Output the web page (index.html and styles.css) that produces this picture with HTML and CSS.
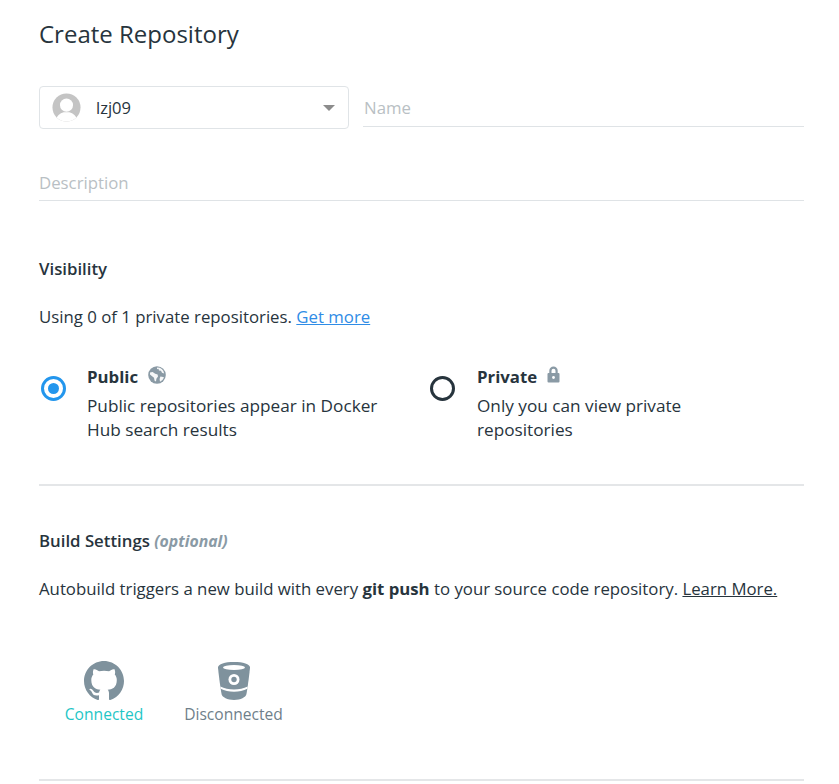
FILE: index.html
```html
<!DOCTYPE html>
<html lang="en">
<head>
<meta charset="utf-8">
<title>Create Repository</title>
<link rel="stylesheet" href="styles.css">
</head>
<body>
<main class="page">
  <h1 class="title">Create Repository</h1>
  <div class="name-row">
    <div class="select">
      <svg class="avatar" viewBox="0 0 30 30" aria-hidden="true">
        <defs><clipPath id="av"><circle cx="15" cy="15" r="14.5"/></clipPath></defs>
        <circle cx="15" cy="15" r="14.5" fill="#c4c4c4"/>
        <g clip-path="url(#av)" fill="#fff">
          <circle cx="15" cy="12.5" r="6.8"/>
          <path d="M3 32c0-7 5-11 9-12h6c4 1 9 5 9 12z"/>
        </g>
      </svg>
      <span class="select-value">lzj09</span>
      <span class="caret"></span>
    </div>
    <div class="field field-name">Name</div>
  </div>
  <div class="field field-desc">Description</div>

  <h2 class="section-title visibility-title">Visibility</h2>
  <p class="text usage">Using 0 of 1 private repositories. <a class="link-blue" href="#">Get more</a></p>

  <div class="radios">
    <div class="radio-item radio-public">
      <span class="radio radio-on"></span>
      <div class="radio-body">
        <div class="radio-head"><strong>Public</strong>
          <svg class="ico-globe" viewBox="0 0 18 18" aria-hidden="true">
            <circle cx="9" cy="9" r="8.8" fill="#8a9aa5"/>
            <path fill="#fff" d="M9 1.6a7.4 7.4 0 0 1 7.2 5.8l-2.2-.6-1-2-2-.4-.6-1.6-1.4.4zM2 6.4l2.6-.4 2.6 1.8 2.4.6.4 2.2-1.6 2.2-.4 2.6-1.4-.6-.6-3L3.800 10 2 8.400zM12.400 10.600l2.800.4.8.6A7.400 7.400 0 0 1 12 15.800l-.4-2.800z" opacity="0.92"/>
          </svg>
        </div>
        <div class="radio-desc">Public repositories appear in Docker Hub search results</div>
      </div>
    </div>
    <div class="radio-item radio-private">
      <span class="radio"></span>
      <div class="radio-body">
        <div class="radio-head"><strong>Private</strong>
          <svg class="ico-lock" viewBox="0 0 13 17" aria-hidden="true">
            <path fill="none" stroke="#8a9aa5" stroke-width="2.200" d="M3.400 8V4.800a3.100 3.100 0 0 1 6.200 0V8"/>
            <rect x="0.500" y="7" width="12" height="9.500" rx="1" fill="#8a9aa5"/>
            <circle cx="6.500" cy="11.500" r="1.400" fill="#fff"/>
          </svg>
        </div>
        <div class="radio-desc">Only you can view private repositories</div>
      </div>
    </div>
  </div>

  <hr class="rule rule-build">

  <h2 class="section-title build-title">Build Settings <em>(optional)</em></h2>
  <p class="text autobuild">Autobuild triggers a new build with every <strong>git push</strong> to your source code repository. <a class="link-dark" href="#">Learn More.</a></p>

  <div class="providers">
    <div class="provider provider-gh">
      <svg class="ico-provider" viewBox="0 0 16 16" aria-hidden="true">
        <path fill="#7f929d" d="M8 0C3.580 0 0 3.580 0 8c0 3.540 2.290 6.530 5.470 7.590.4.070.55-.17.55-.38 0-.19-.01-.82-.01-1.490-2.010.37-2.530-.49-2.690-.94-.09-.23-.48-.94-.82-1.130-.28-.15-.68-.52-.01-.53.630-.01 1.080.58 1.230.82.720 1.210 1.870.87 2.330.66.070-.52.280-.87.510-1.070-1.780-.2-3.640-.89-3.640-3.950 0-.87.310-1.590.82-2.150-.08-.2-.36-1.020.08-2.120 0 0 .67-.21 2.200.82.640-.18 1.320-.27 2-.27s1.360.09 2 .27c1.530-1.040 2.200-.82 2.200-.82.440 1.100.16 1.920.08 2.120.51.560.82 1.270.82 2.150 0 3.070-1.870 3.750-3.650 3.950.29.250.54.730.54 1.480 0 1.070-.01 1.930-.01 2.200 0 .21.150.46.550.38A8.010 8.010 0 0 0 16 8c0-4.420-3.580-8-8-8z"/>
      </svg>
      <span class="provider-label connected">Connected</span>
    </div>
    <div class="provider provider-bb">
      <svg class="ico-provider" viewBox="0 0 40 40" aria-hidden="true">
        <path fill="#7f929d" d="M20 1C11 1 4 3 4 6.500c0 1 2.300 21 3.700 27 .6 2.500 5.600 5.500 12.300 5.500s11.700-3 12.300-5.500c1.400-6 3.700-26 3.700-27C36 3 29 1 20 1z"/>
        <ellipse cx="20" cy="6.500" rx="11" ry="2.600" fill="#fff"/>
        <path fill="#fff" d="M6.300 25.500c4 2 8.600 3 13.700 3s9.700-1 13.700-3l-.3 2.200c-4 2-8.400 3-13.400 3s-9.400-1-13.400-3z"/>
        <circle cx="20" cy="18.500" r="5.500" fill="#fff"/>
        <circle cx="20" cy="18.500" r="2.700" fill="#7f929d"/>
      </svg>
      <span class="provider-label">Disconnected</span>
    </div>
  </div>

  <hr class="rule rule-end">
</main>
</body>
</html>
```

FILE: styles.css
```css
* { box-sizing: border-box; }
html, body { margin: 0; padding: 0; background: #fff; }
body {
  font-family: "Open Sans", "Liberation Sans", sans-serif;
  font-size: 16px;
  color: #27343d;
  height: 784px;
  overflow: hidden;
}
.page { padding: 18px 35px 0 39px; }
.title { margin: 0; font-size: 24px; font-weight: 400; line-height: 32px; color: #27343d; }
.name-row { display: flex; gap: 14px; margin-top: 36px; }
.select {
  width: 310px; height: 43px; flex: none;
  display: flex; align-items: center;
  padding: 0 13px 0 12px;
  border: 1px solid #e0e4e7; border-radius: 4px;
}
.avatar { width: 29px; height: 29px; flex: none; margin-top: -1px; }
.select-value { margin-left: 15px; flex: 1; font-size: 16.500px; margin-top: -1px; }
.caret { width: 0; height: 0; border-left: 6px solid transparent; border-right: 6px solid transparent; border-top: 6px solid #8c8c8c; }
.field { color: #b9bfc4; font-size: 16.800px; line-height: 24px; border-bottom: 1px solid #dfe3e6; }
.field-name { flex: 1; height: 41px; padding: 10px 0 0 1px; }
.field-desc { height: 32px; margin-top: 40px; padding-top: 2px; }
.section-title { margin: 0; font-size: 16.800px; font-weight: 600; line-height: 24px; color: #27343d; }
.visibility-title { margin-top: 56px; }
.text { margin: 0; font-size: 16.800px; line-height: 24px; }
.usage { margin-top: 24px; }
.link-blue { color: #2f8ce6; }
.link-dark { color: #27343d; }
.radios { display: flex; margin-top: 36px; }
.radio-item { display: flex; flex: none; }
.radio-public { width: 390px; padding-left: 2px; }
.radio { width: 25px; height: 25px; flex: none; margin-top: 11px; border-radius: 50%; border: 3px solid #27343d; background: #fff; }
.radio-on { border-color: #2396ed; position: relative; }
.radio-on::after { content: ""; position: absolute; left: 4px; top: 4px; width: 11px; height: 11px; border-radius: 50%; background: #2396ed; }
.radio-public .radio-body { margin-left: 21px; width: 300px; }
.radio-private { padding-left: 1px; }
.radio-private .radio-body { margin-left: 22px; width: 240px; }
.radio-head { display: flex; align-items: flex-start; height: 24px; line-height: 24px; }
.radio-head strong { font-weight: 700; font-size: 16.800px; }
.ico-globe { width: 18px; height: 18px; margin-left: 10px; margin-top: 1px; }
.ico-lock { width: 13px; height: 17px; margin-left: 10px; margin-top: 1px; }
.radio-desc { margin-top: 5px; line-height: 24px; font-size: 17.200px; }
.rule { border: 0; border-top: 2px solid #e4e6e8; margin: 0; }
.rule-build { margin-top: 42px; }
.build-title { margin-top: 43px; }
.build-title em { color: #8a9aa5; font-weight: 700; font-style: italic; font-size: 15.800px; }
.autobuild { margin-top: 24px; font-size: 16.780px; }
.autobuild strong { font-weight: 700; }
.providers { display: flex; margin-top: 60px; }
.provider { display: flex; flex-direction: column; align-items: center; }
.provider-gh { margin-left: 26px; width: 78px; }
.provider-bb { margin-left: 41px; width: 99px; }
.ico-provider { width: 40px; height: 40px; }
.provider-label { margin-top: 1px; font-size: 15.600px; line-height: 24px; color: #6f7f8a; white-space: nowrap; }
.connected { color: #1fc6c6; }
.rule-end { margin-top: 53px; }
```
